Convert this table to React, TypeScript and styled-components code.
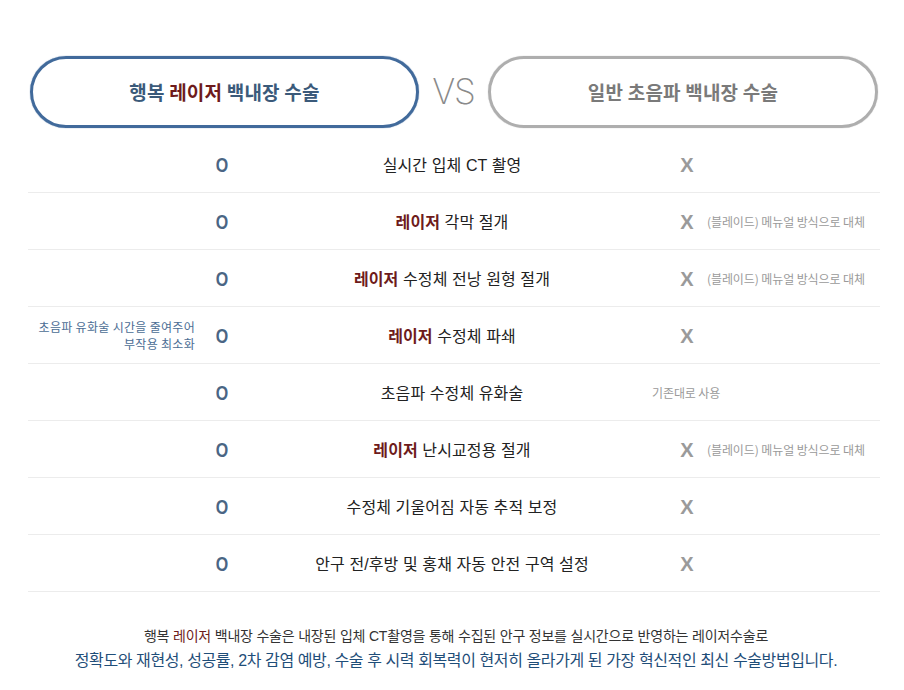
import React from "react";
import styled, { createGlobalStyle } from "styled-components";

const Global = createGlobalStyle`
  html, body { margin: 0; padding: 0; background: #fff; }
  body { font-family: "Liberation Sans", "Noto Sans CJK KR", sans-serif; }
`;

const Page = styled.div`
  width: 904px;
  padding: 56px 24px 0 28px;
  box-sizing: border-box;
`;

const Header = styled.div`
  display: grid;
  grid-template-columns: 389px 1fr 390px;
  align-items: center;
  margin: 0 2px 0 2px;
`;

const Pill = styled.div<{ $variant: "main" | "plain" }>`
  height: 72px;
  box-sizing: border-box;
  border-radius: 36px;
  border: 3px solid ${(p) => (p.$variant === "main" ? "#416a9b" : "#aeaeae")};
  box-shadow: 0 0 1px ${(p) => (p.$variant === "main" ? "#416a9b" : "#aeaeae")};
  display: flex;
  align-items: center;
  justify-content: center;
  font-family: "Noto Sans CJK KR", sans-serif;
  font-weight: 700;
  font-size: 19px;
  letter-spacing: 0.2px;
  color: ${(p) => (p.$variant === "main" ? "#3b5a7a" : "#7a7a7a")};
  padding-bottom: 2px;
`;

const Red = styled.span<{ $light?: boolean }>`
  color: #6e1b1b;
  font-weight: ${(p) => (p.$light ? 400 : 700)};
`;

const Vs = styled.div`
  text-align: center;
  font-family: "Inter", sans-serif;
  font-weight: 200;
  font-size: 35px;
  color: #8a8a8a;
  letter-spacing: -1px;
  padding-bottom: 2px;
`;

const Table = styled.div`
  margin-top: 8px;
  width: 852px;
`;

const Row = styled.div`
  display: grid;
  grid-template-columns: 169px 50px 405px 1fr;
  align-items: center;
  height: 57px;
  box-sizing: border-box;
  border-bottom: 1px solid #ececec;
`;

const SideNote = styled.div`
  text-align: right;
  padding-right: 2px;
  font-family: "Noto Sans CJK KR", sans-serif;
  font-size: 12px;
  line-height: 17px;
  letter-spacing: 0.3px;
  color: #4b6d94;
`;

const Mark = styled.div`
  text-align: center;
  font-family: "Liberation Sans", sans-serif;
  font-weight: 700;
  font-size: 20px;
  color: #4a6584;
  transform: scaleX(0.8);
  padding-top: 2px;
`;

const Feature = styled.div`
  text-align: center;
  padding-left: 5px;
  font-family: "Liberation Sans", "Noto Sans CJK KR", sans-serif;
  font-size: 16px;
  letter-spacing: 0.1px;
  color: #222;
`;

const Other = styled.div`
  display: flex;
  align-items: center;
`;

const Cross = styled.span`
  width: 14px;
  margin-left: 28px;
  margin-right: 13px;
  text-align: center;
  font-family: "Liberation Sans", sans-serif;
  font-weight: 700;
  font-size: 20px;
  color: #9a9a9a;
  padding-top: 3px;
`;

const Note = styled.span`
  font-family: "Noto Sans CJK KR", sans-serif;
  font-size: 12px;
  letter-spacing: -0.1px;
  color: #9a9a9a;
`;

const Footer = styled.div`
  width: 852px;
  text-align: center;
  padding-top: 33px;
  padding-left: 2px;
`;

const FootLine1 = styled.div`
  font-family: "Liberation Sans", "Noto Sans CJK KR", sans-serif;
  font-size: 14px;
  letter-spacing: -0.2px;
  line-height: 22px;
  color: #333;
`;

const FootLine2 = styled.div`
  margin-top: 3px;
  font-family: "Liberation Sans", "Noto Sans CJK KR", sans-serif;
  font-size: 16px;
  letter-spacing: -0.4px;
  line-height: 22px;
  color: #1f4e79;
`;

type RowData = {
  side?: string[];
  feature: React.ReactNode;
  cross: boolean;
  note?: string;
  plain?: string;
};

const NOTE = "(블레이드) 메뉴얼 방식으로 대체";

const rows: RowData[] = [
  { feature: "실시간 입체 CT 촬영", cross: true },
  { feature: <><Red>레이저</Red> 각막 절개</>, cross: true, note: NOTE },
  { feature: <><Red>레이저</Red> 수정체 전낭 원형 절개</>, cross: true, note: NOTE },
  {
    side: ["초음파 유화술 시간을 줄여주어", "부작용 최소화"],
    feature: <><Red>레이저</Red> 수정체 파쇄</>,
    cross: true,
  },
  { feature: "초음파 수정체 유화술", cross: false, plain: "기존대로 사용" },
  { feature: <><Red>레이저</Red> 난시교정용 절개</>, cross: true, note: NOTE },
  { feature: "수정체 기울어짐 자동 추적 보정", cross: true },
  { feature: "안구 전/후방 및 홍채 자동 안전 구역 설정", cross: true },
];

export default function App() {
  return (
    <Page>
      <Global />
      <Header>
        <Pill $variant="main">
          행복&nbsp;<Red>레이저</Red>&nbsp;백내장 수술
        </Pill>
        <Vs>VS</Vs>
        <Pill $variant="plain">일반 초음파 백내장 수술</Pill>
      </Header>
      <Table>
        {rows.map((r, i) => (
          <Row key={i}>
            <SideNote>
              {r.side?.map((l, j) => (
                <div key={j}>{l}</div>
              ))}
            </SideNote>
            <Mark>O</Mark>
            <Feature>{r.feature}</Feature>
            <Other>
              {r.cross && <Cross>X</Cross>}
              {r.note && <Note>{r.note}</Note>}
              {r.plain && <Note>{r.plain}</Note>}
            </Other>
          </Row>
        ))}
      </Table>
      <Footer>
        <FootLine1>
          행복 <Red $light>레이저</Red> 백내장 수술은 내장된 입체 CT촬영을 통해 수집된 안구 정보를 실시간으로 반영하는 레이저수술로
        </FootLine1>
        <FootLine2>
          정확도와 재현성, 성공률, 2차 감염 예방, 수술 후 시력 회복력이 현저히 올라가게 된 가장 혁신적인 최신 수술방법입니다.
        </FootLine2>
      </Footer>
    </Page>
  );
}
